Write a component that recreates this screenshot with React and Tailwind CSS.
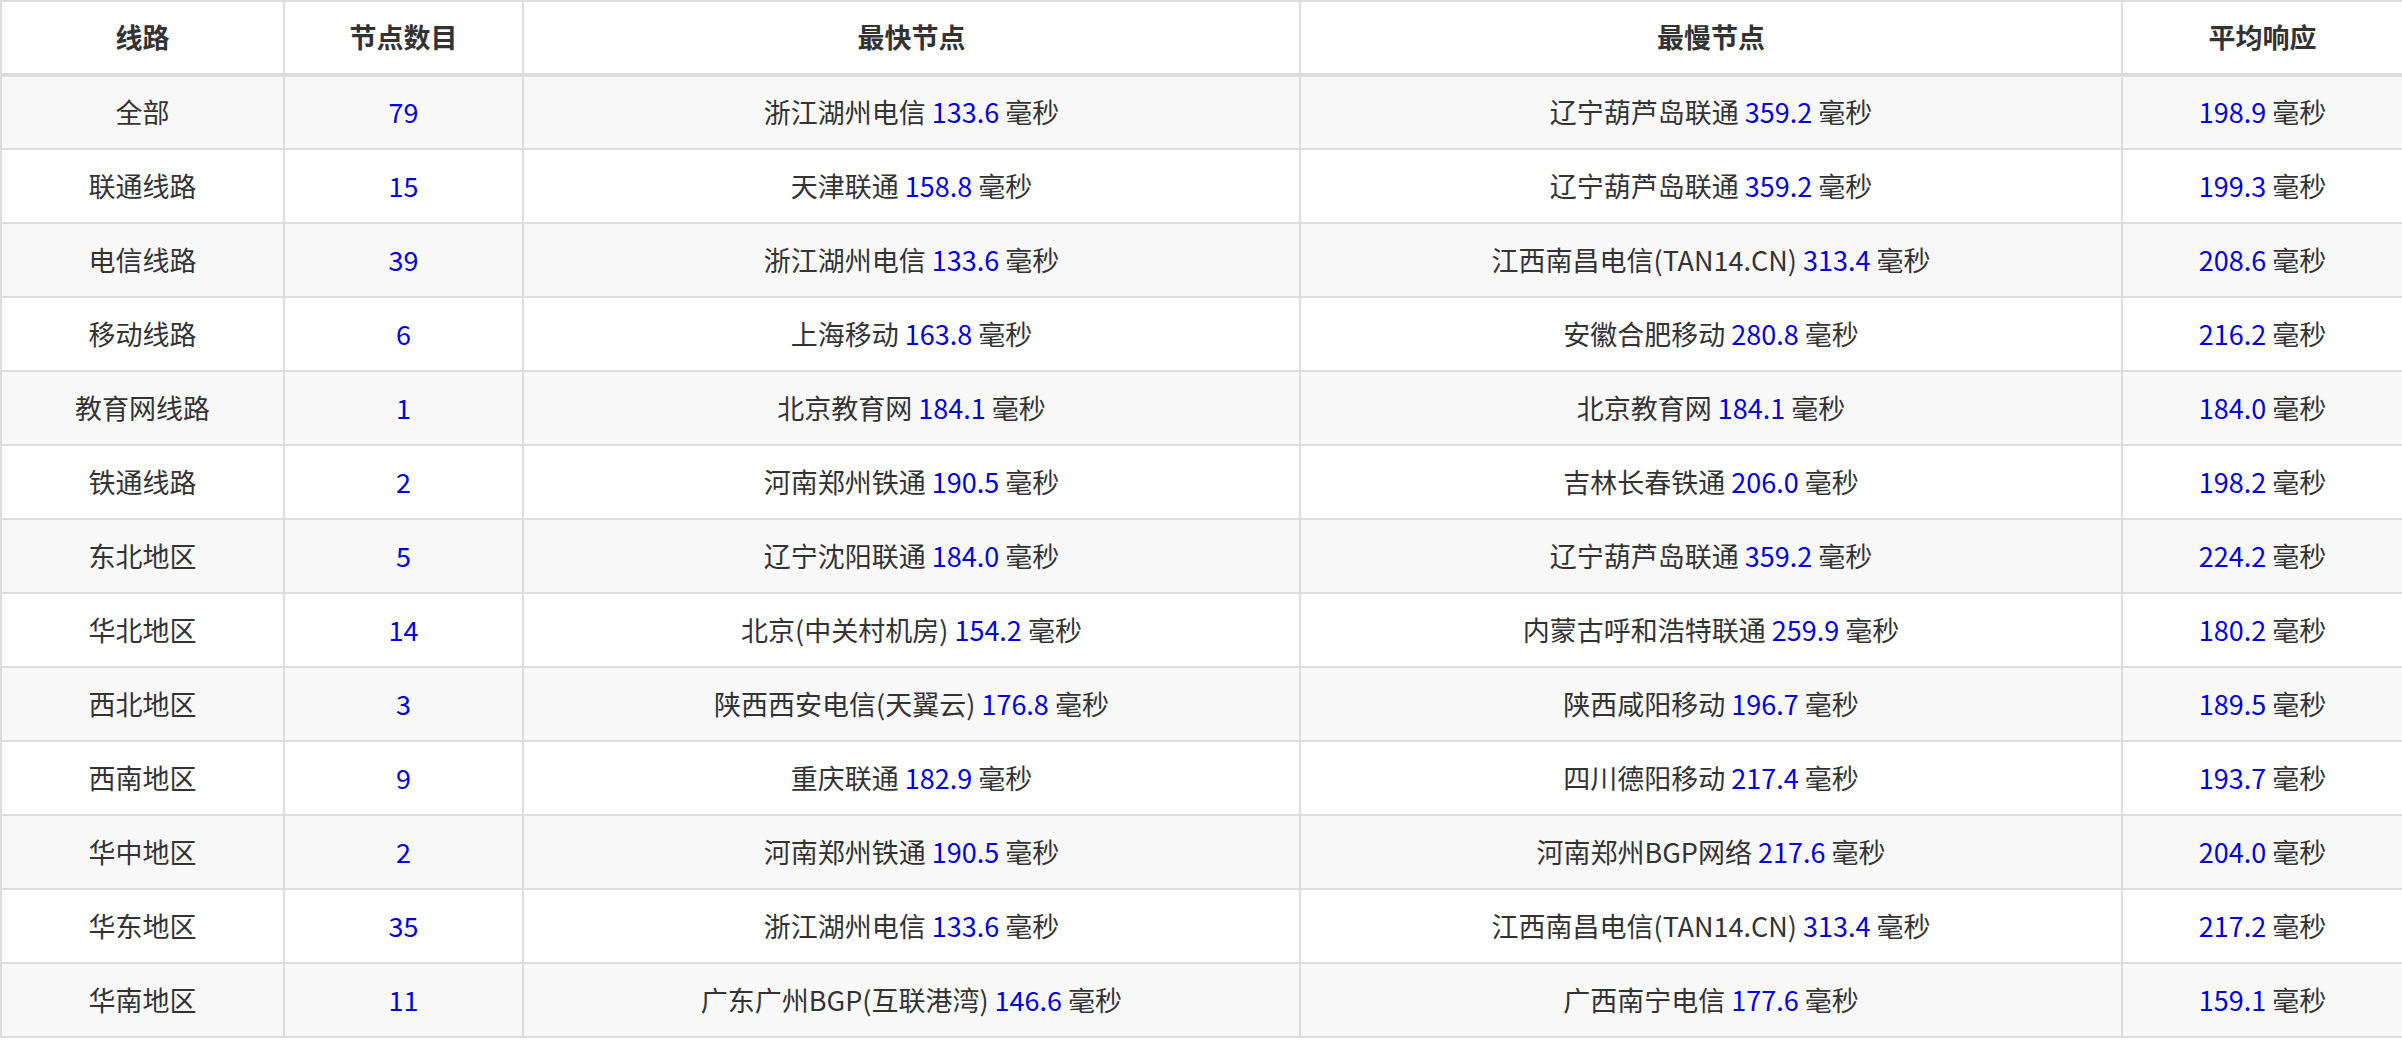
const rows = [
  ["全部", "79", "浙江湖州电信", "133.6", "辽宁葫芦岛联通", "359.2", "198.9"],
  ["联通线路", "15", "天津联通", "158.8", "辽宁葫芦岛联通", "359.2", "199.3"],
  ["电信线路", "39", "浙江湖州电信", "133.6", "江西南昌电信(TAN14.CN)", "313.4", "208.6"],
  ["移动线路", "6", "上海移动", "163.8", "安徽合肥移动", "280.8", "216.2"],
  ["教育网线路", "1", "北京教育网", "184.1", "北京教育网", "184.1", "184.0"],
  ["铁通线路", "2", "河南郑州铁通", "190.5", "吉林长春铁通", "206.0", "198.2"],
  ["东北地区", "5", "辽宁沈阳联通", "184.0", "辽宁葫芦岛联通", "359.2", "224.2"],
  ["华北地区", "14", "北京(中关村机房)", "154.2", "内蒙古呼和浩特联通", "259.9", "180.2"],
  ["西北地区", "3", "陕西西安电信(天翼云)", "176.8", "陕西咸阳移动", "196.7", "189.5"],
  ["西南地区", "9", "重庆联通", "182.9", "四川德阳移动", "217.4", "193.7"],
  ["华中地区", "2", "河南郑州铁通", "190.5", "河南郑州BGP网络", "217.6", "204.0"],
  ["华东地区", "35", "浙江湖州电信", "133.6", "江西南昌电信(TAN14.CN)", "313.4", "217.2"],
  ["华南地区", "11", "广东广州BGP(互联港湾)", "146.6", "广西南宁电信", "177.6", "159.1"],
];

const Ms = ({ v }) => (
  <>
    <span className="text-[#0000dd]">{v}</span> 毫秒
  </>
);

export default function App() {
  const td = "border-2 border-[#dddddd] h-[74px] text-center align-middle px-3";
  return (
    <div className="w-[2402px] h-[1043px] bg-white" style={{ fontFamily: '"Noto Sans CJK SC", "Noto Sans", sans-serif' }}>
      <table className="w-[2402px] border-collapse table-fixed text-[27px] text-[#333333]">
        <colgroup>
          <col className="w-[283px]" />
          <col className="w-[239px]" />
          <col className="w-[777px]" />
          <col className="w-[822px]" />
          <col className="w-[281px]" />
        </colgroup>
        <thead>
          <tr>
            {["线路", "节点数目", "最快节点", "最慢节点", "平均响应"].map((h) => (
              <th key={h} className={`${td} font-bold border-b-4`}>{h}</th>
            ))}
          </tr>
        </thead>
        <tbody>
          {rows.map((r, i) => (
            <tr key={r[0]} className={i % 2 === 0 ? "bg-[#f8f8f8]" : "bg-white"}>
              <td className={`${td} h-[74.4px]`}>{r[0]}</td>
              <td className={`${td} text-[#0000dd]`}>{r[1]}</td>
              <td className={td}>{r[2]} <Ms v={r[3]} /></td>
              <td className={td}>{r[4]} <Ms v={r[5]} /></td>
              <td className={td}><Ms v={r[6]} /></td>
            </tr>
          ))}
        </tbody>
      </table>
    </div>
  );
}
